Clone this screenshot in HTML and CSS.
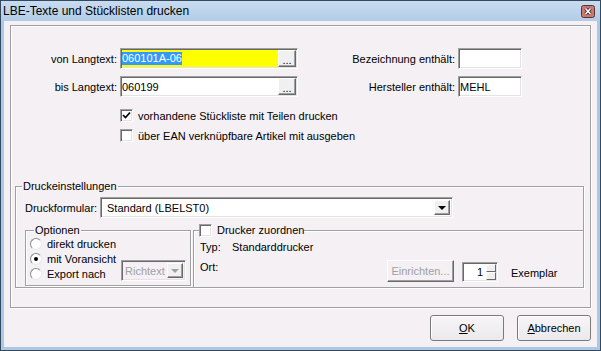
FILE: index.html
```html
<!DOCTYPE html>
<html lang="de">
<head>
  <meta charset="UTF-8" />
  <title>LBE-Texte und Stücklisten drucken</title>
  <link rel="stylesheet" href="styles.css">
</head>
<body>
  <div class="window">
    <div class="titlebar">
      <span class="title">LBE-Texte und Stücklisten drucken</span>
      <span class="close">
        <svg width="14" height="13" viewBox="0 0 14 13">
          <rect x="0.5" y="0.5" width="13" height="12" rx="2" fill="#c97a70" stroke="#5b3535"/>
          <path d="M4.5 3.5 L9.5 9 M9.5 3.5 L4.5 9" stroke="#3a2020" stroke-width="3.2"/>
          <path d="M4.5 3.5 L9.5 9 M9.5 3.5 L4.5 9" stroke="#fff" stroke-width="1.6"/>
        </svg>
      </span>
    </div>

    <div class="client">
      <div class="panel">
        <div class="row">
          <span class="lbl">von Langtext:</span>
          <div class="edit lookup">
            <span class="edit-text yellow"><span class="sel">060101A-06</span></span>
            <span class="dots">...</span>
          </div>
          <span class="lbl-right">Bezeichnung enthält:</span>
          <div class="edit short"></div>
        </div>
        <div class="row">
          <span class="lbl">bis Langtext:</span>
          <div class="edit lookup">
            <span class="edit-text">060199</span>
            <span class="dots">...</span>
          </div>
          <span class="lbl-right">Hersteller enthält:</span>
          <div class="edit short">MEHL</div>
        </div>

        <div class="check-row first">
          <span class="check">
            <svg width="9" height="9" viewBox="0 0 9 9"><path d="M1 4 L3.5 6.5 L8 1.5" stroke="#000" stroke-width="1.7" fill="none"/></svg>
          </span>
          vorhandene Stückliste mit Teilen drucken
        </div>
        <div class="check-row">
          <span class="check"></span>
          über EAN verknüpfbare Artikel mit ausgeben
        </div>

        <div class="group print">
          <span class="group-title">Druckeinstellungen</span>
          <div class="form-row">
            <span class="form-lbl">Druckformular:</span>
            <div class="combo wide">
              <span class="combo-text">Standard (LBELST0)</span>
              <span class="drop"><span class="arrow"></span></span>
            </div>
          </div>

          <div class="sub-row">
            <div class="group options">
              <span class="group-title">Optionen</span>
              <div class="radio-row"><span class="radio"></span>direkt drucken</div>
              <div class="radio-row"><span class="radio on"></span>mit Voransicht</div>
              <div class="radio-row">
                <span class="radio"></span>Export nach
                <div class="combo small disabled">
                  <span class="combo-text">Richtext</span>
                  <span class="drop"><span class="arrow"></span></span>
                </div>
              </div>
            </div>

            <div class="group printer">
              <span class="group-title"><span class="check"></span>Drucker zuordnen</span>
              <div class="info-row">
                <span class="info-lbl">Typ:</span>
                <span>Standarddrucker</span>
              </div>
              <div class="device-row">
                <span class="info-lbl ort">Ort:</span>
                <button class="btn setup" disabled>Einrichten...</button>
                <div class="spin">
                  <span class="spin-val">1</span>
                  <span class="spin-btns"><span></span><span></span></span>
                </div>
                <span class="copies">Exemplar</span>
              </div>
            </div>
          </div>
        </div>
      </div>

      <div class="buttons">
        <button class="btn"><u>O</u>K</button>
        <button class="btn"><u>A</u>bbrechen</button>
      </div>
    </div>
  </div>
</body>
</html>
```

FILE: styles.css
```css
* {
  box-sizing: border-box;
}
body {
  margin: 0;
  font-family: "Liberation Sans", Arial, sans-serif;
  font-size: 11px;
  color: #000;
}
.window {
  width: 601px;
  height: 351px;
  border: 1px solid #34495c;
  background: #a9c9e6;
  display: flex;
  flex-direction: column;
}
.titlebar {
  height: 20px;
  display: flex;
  align-items: center;
  justify-content: space-between;
  padding: 0 5px 0 2px;
  background: linear-gradient(#c8dcf0, #b2cce7);
}
.title {
  font-size: 12px;
}
.close {
  display: flex;
}
.client {
  flex: 1;
  margin: 0 3px 3px;
  background: #f4f0f4;
  padding: 4px 6px 0 6px;
}
.panel {
  width: 581px;
  height: 283px;
  border: 1px solid #a0a0a0;
  box-shadow: inset 1px 1px #fff, 1px 1px #fff;
  padding-top: 22px;
}

/* edit fields */
.row {
  display: flex;
  align-items: center;
  width: 511px;
  height: 21px;
}
.row + .row {
  margin-top: 7px;
}
.lbl {
  width: 106px;
  text-align: right;
  margin-right: 3px;
}
.lbl-right {
  flex: 1;
  text-align: right;
  margin-right: 3px;
}
.edit {
  height: 21px;
  display: flex;
  align-items: center;
  background: #fff;
  border: 1px solid;
  border-color: #a0a0a0 #fff #fff #a0a0a0;
  box-shadow: inset 1px 1px #696969, inset -1px -1px #e3e3e3;
  padding: 1px;
}
.lookup {
  width: 178px;
}
.short {
  width: 64px;
}
.edit-text {
  flex: 1;
  align-self: stretch;
  display: flex;
  align-items: center;
}
.yellow {
  background: #ffff00;
}
.sel {
  background: #3399ff;
  color: #fff;
  line-height: 13px;
}
.dots {
  width: 18px;
  align-self: stretch;
  display: flex;
  align-items: center;
  justify-content: center;
  padding-top: 3px;
  background: #f0f0f0;
  border: 1px solid;
  border-color: #fff #696969 #696969 #fff;
  box-shadow: inset -1px -1px #a0a0a0;
}

/* check boxes and radios */
.check-row {
  display: flex;
  align-items: center;
  height: 13px;
  margin: 7px 0 0 109px;
}
.check-row.first {
  margin-top: 12px;
}
.check {
  width: 13px;
  height: 13px;
  margin-right: 5px;
  display: flex;
  align-items: center;
  justify-content: center;
  background: #fff;
  border: 1px solid;
  border-color: #a0a0a0 #fff #fff #a0a0a0;
  box-shadow: inset 1px 1px #696969, inset -1px -1px #e3e3e3;
}
.radio-row {
  display: flex;
  align-items: center;
  height: 15px;
}
.radio {
  width: 12px;
  height: 12px;
  margin-right: 5px;
  border-radius: 50%;
  background: #fff;
  border: 1px solid;
  border-color: #8a8a8a #e8e8e8 #e8e8e8 #8a8a8a;
  display: flex;
  align-items: center;
  justify-content: center;
}
.radio.on::after {
  content: "";
  width: 4px;
  height: 4px;
  border-radius: 50%;
  background: #000;
}

/* group boxes */
.group {
  position: relative;
  border: 1px solid #a0a0a0;
  box-shadow: inset 1px 1px #fff, 1px 1px #fff;
}
.group-title {
  position: absolute;
  top: -7px;
  left: 6px;
  padding: 0 1px;
  line-height: 13px;
  background: #f4f0f4;
  display: flex;
  align-items: center;
}
.print {
  margin: 44px 0 0 4px;
  width: 569px;
  height: 102px;
  padding: 10px 0 0 9px;
}
.form-row {
  display: flex;
  align-items: center;
  height: 21px;
}
.form-lbl {
  width: 75px;
}
.combo {
  height: 21px;
  display: flex;
  align-items: center;
  background: #fff;
  border: 1px solid;
  border-color: #a0a0a0 #fff #fff #a0a0a0;
  box-shadow: inset 1px 1px #696969, inset -1px -1px #e3e3e3;
  padding: 2px;
}
.combo.wide {
  width: 353px;
}
.combo-text {
  flex: 1;
  padding-left: 4px;
}
.drop {
  width: 16px;
  align-self: stretch;
  display: flex;
  align-items: center;
  justify-content: center;
  background: #f0f0f0;
  border: 1px solid;
  border-color: #fff #696969 #696969 #fff;
  box-shadow: inset -1px -1px #a0a0a0;
}
.arrow {
  border-left: 4px solid transparent;
  border-right: 4px solid transparent;
  border-top: 4px solid #000;
}
.combo.disabled {
  background: #f4f0f4;
  color: #a0a0a0;
}
.combo.disabled .combo-text {
  padding-left: 1px;
}
.combo.disabled .arrow {
  border-top-color: #a0a0a0;
}
.combo.small {
  width: 65px;
  margin: -6px 4px 0 auto;
}
.sub-row {
  display: flex;
  margin-top: 12px;
}
.options {
  width: 166px;
  height: 56px;
  padding: 5px 0 0 4px;
}
.options .group-title {
  left: 8px;
}
.printer {
  flex: 1;
  height: 58px;
  margin: 0 -1px 0 2px;
  padding: 10px 0 0 6px;
}
.printer .group-title {
  left: 5px;
  padding: 0;
}
.info-row {
  display: flex;
  line-height: 13px;
}
.info-lbl {
  width: 32px;
}
.device-row {
  display: flex;
  align-items: flex-start;
  margin-top: 6px;
}
.ort {
  margin-top: 1px;
  line-height: 13px;
}

/* buttons */
.btn {
  width: 74px;
  height: 26px;
  padding: 0;
  font: inherit;
  color: #000;
  background: linear-gradient(#f7f5f7, #ebe9eb);
  border: 1px solid #7a7a7a;
  border-radius: 3px;
  box-shadow: inset 1px 1px #fff;
}
.btn.setup {
  width: 67px;
  height: 22px;
  margin-left: 155px;
  color: #a0a0a0;
  border-radius: 0;
  border-color: #fff #696969 #696969 #fff;
  background: #f4f0f4;
  box-shadow: inset -1px -1px #a0a0a0;
}
.spin {
  width: 36px;
  height: 20px;
  margin: 2px 0 0 8px;
  display: flex;
  background: #fff;
  border: 1px solid;
  border-color: #a0a0a0 #fff #fff #a0a0a0;
  box-shadow: inset 1px 1px #696969, inset -1px -1px #e3e3e3;
  padding: 1px;
}
.spin-val {
  flex: 1;
  text-align: right;
  padding-right: 3px;
  line-height: 16px;
}
.spin-btns {
  width: 10px;
  display: flex;
  flex-direction: column;
}
.spin-btns span {
  flex: 1;
  background: #f0f0f0;
  border: 1px solid;
  border-color: #fff #696969 #696969 #fff;
}
.copies {
  margin: 7px 0 0 13px;
  line-height: 13px;
}
.buttons {
  display: flex;
  justify-content: flex-end;
  gap: 13px;
  margin-top: 7px;
}
```
